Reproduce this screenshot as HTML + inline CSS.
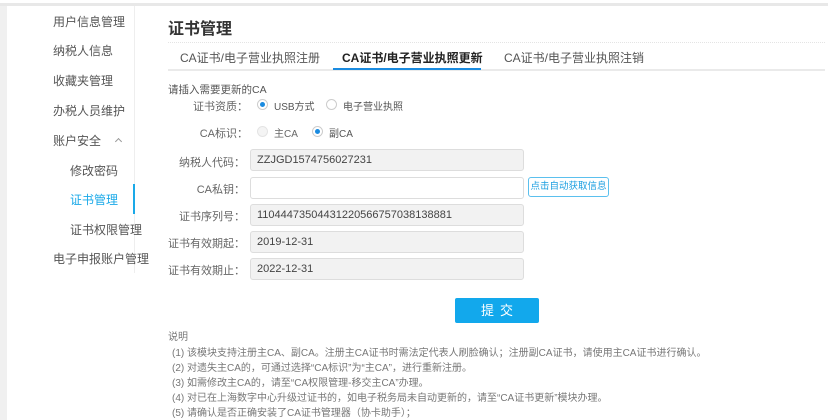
<!DOCTYPE html>
<html><head><meta charset="utf-8"><style>
*{margin:0;padding:0;box-sizing:border-box}
body{width:833px;height:420px;background:#fff;position:relative;overflow:hidden;font-family:"Liberation Sans","Noto Sans CJK SC",sans-serif;color:#555}
.a{position:absolute;white-space:nowrap}
.side{font-size:12px;color:#555}
.lbl{font-size:11px;color:#666;text-align:right;width:100px}
.inp{position:absolute;left:250px;width:274px;height:22px;border:1px solid #ddd;border-radius:3px;background:#f2f2f2;font-size:11px;color:#444;padding-left:6px;line-height:20px}
.rad{position:absolute;width:11px;height:11px;border:1px solid #ccc;border-radius:50%;background:#fff}
.rad.on::after{content:"";position:absolute;left:2px;top:2px;width:5px;height:5px;border-radius:50%;background:#1a8be0}
.note{font-size:10px;color:#777;left:168px}
.tab{font-size:12px;top:49px}
</style></head><body>
<div class="a" style="left:0;top:3px;width:828px;height:3px;background:#e8e8e8"></div>
<div class="a" style="left:0;top:6px;width:7px;height:414px;background:#f0f0f0"></div>
<div class="a" style="left:134px;top:6px;width:1px;height:267px;background:#eee"></div>
<div class="a" style="left:133px;top:184px;width:2px;height:30px;background:#1aa9e8"></div>
<div class="a side" style="left:53px;top:13px">用户信息管理</div>
<div class="a side" style="left:53px;top:42px">纳税人信息</div>
<div class="a side" style="left:53px;top:72px">收藏夹管理</div>
<div class="a side" style="left:53px;top:102px">办税人员维护</div>
<div class="a side" style="left:53px;top:132px">账户安全</div>
<div class="a" style="left:116px;top:139px;width:5px;height:5px;border-left:1px solid #999;border-top:1px solid #999;transform:rotate(45deg)"></div>
<div class="a side" style="left:70px;top:162px">修改密码</div>
<div class="a side" style="left:70px;top:191px;color:#1aa9e8">证书管理</div>
<div class="a side" style="left:70px;top:221px">证书权限管理</div>
<div class="a side" style="left:53px;top:250px">电子申报账户管理</div>

<div class="a" style="left:168px;top:15px;font-size:16px;font-weight:bold;color:#333">证书管理</div>
<div class="a" style="left:168px;top:42px;width:657px;border-top:1px dotted #e4e4e4"></div>
<div class="a" style="left:168px;top:69px;width:657px;height:2px;background:#eaeaea"></div>
<div class="a" style="left:333px;top:68px;width:148px;height:2px;background:#1a8be0"></div>
<div class="a tab" style="left:180px;color:#555">CA证书/电子营业执照注册</div>
<div class="a tab" style="left:342px;color:#222;font-weight:bold">CA证书/电子营业执照更新</div>
<div class="a tab" style="left:504px;color:#555">CA证书/电子营业执照注销</div>

<div class="a" style="left:168px;top:82px;font-size:10.5px;color:#555">请插入需要更新的CA</div>
<div class="a lbl" style="left:148px;top:98px">证书资质：</div>
<div class="rad on" style="left:257px;top:99px"></div>
<div class="a" style="left:274px;top:98px;font-size:10px;color:#555">USB方式</div>
<div class="rad" style="left:326px;top:99px"></div>
<div class="a" style="left:343px;top:98px;font-size:10px;color:#555">电子营业执照</div>
<div class="a lbl" style="left:148px;top:125px">CA标识：</div>
<div class="rad" style="left:257px;top:126px;background:#f4f4f4;border-color:#e4e4e4"></div>
<div class="a" style="left:274px;top:125px;font-size:10px;color:#666">主CA</div>
<div class="rad on" style="left:312px;top:126px"></div>
<div class="a" style="left:329px;top:125px;font-size:10px;color:#555">副CA</div>

<div class="a lbl" style="left:145px;top:154px">纳税人代码：</div>
<div class="inp" style="top:149px">ZZJGD1574756027231</div>
<div class="a lbl" style="left:145px;top:181px">CA私钥：</div>
<div class="inp" style="top:177px;background:#fff"></div>
<div class="a" style="left:528px;top:177px;width:81px;height:20px;border:1px solid #5bc0ee;border-radius:3px;font-size:9.5px;color:#1a9ee0;text-align:center;line-height:18px">点击自动获取信息</div>
<div class="a lbl" style="left:145px;top:208px">证书序列号：</div>
<div class="inp" style="top:204px">11044473504431220566757038138881</div>
<div class="a lbl" style="left:145px;top:235px">证书有效期起：</div>
<div class="inp" style="top:231px">2019-12-31</div>
<div class="a lbl" style="left:145px;top:262px">证书有效期止：</div>
<div class="inp" style="top:258px">2022-12-31</div>

<div class="a" style="left:455px;top:298px;width:84px;height:25px;background:#12a8ec;border-radius:2px;color:#fff;font-size:13px;text-align:center;line-height:25px;letter-spacing:6px;padding-left:6px">提交</div>

<div class="a note" style="top:328px">说明</div>
<div class="a note" style="top:344px;left:172px">(1) 该模块支持注册主CA、副CA。注册主CA证书时需法定代表人刷脸确认；注册副CA证书，请使用主CA证书进行确认。</div>
<div class="a note" style="top:359px;left:172px">(2) 对遗失主CA的，可通过选择“CA标识”为“主CA”，进行重新注册。</div>
<div class="a note" style="top:374px;left:172px">(3) 如需修改主CA的，请至“CA权限管理-移交主CA”办理。</div>
<div class="a note" style="top:389px;left:172px">(4) 对已在上海数字中心升级过证书的，如电子税务局未自动更新的，请至“CA证书更新”模块办理。</div>
<div class="a note" style="top:404px;left:172px">(5) 请确认是否正确安装了CA证书管理器（协卡助手）；</div>
</body></html>
